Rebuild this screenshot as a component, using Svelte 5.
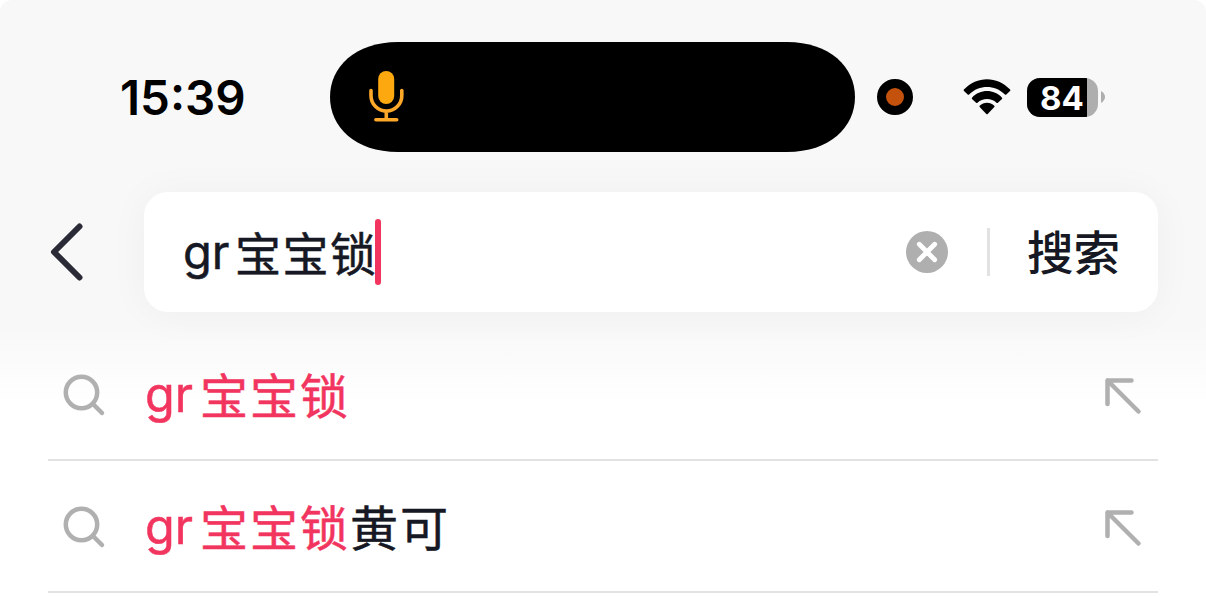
<script>
    let query = { latin: 'gr', cjk: '宝宝锁' };
    let battery = 84;

    // Each suggestion keeps the matched part apart from the rest
    let suggestions = [
        { rest: '' },
        { rest: '黄可' },
    ];
</script>

<div class="screen">
    <header class="status">
        <span class="time">15:39</span>
        <div class="island">
            <!-- The pill's ends are flatter than a plain ellipse -->
            <svg class="pill" width="525" height="110" viewBox="0 0 525 110">
                <path d="M68 0H457C500 0 525 25 525 55S500 110 457 110H68C25 110 0 85 0 55S25 0 68 0Z" />
            </svg>
            <svg class="mic" width="38" height="54" viewBox="0 0 38 54">
                <rect x="10.2" y="2" width="16" height="33" rx="8" fill="#fea810" />
                <path d="M3 21.5v5.2a15.4 15.4 0 0 0 30.8 0v-5.2M18.3 42.5v8M7.9 50.8h20.8" />
            </svg>
        </div>
        <span class="recording"></span>
        <svg class="wifi" width="48" height="36" viewBox="0 0 48 36">
            <path d="M0.9 10.6C14 -3.2 34 -3.2 47.1 10.6Q47.6 11.3 47 12L43.3 15.4Q42.6 16 41.9 15.4C31.5 5.6 16.5 5.6 6.1 15.4Q5.4 16 4.7 15.4L1 12Q.4 11.3 .9 10.6Z" />
            <path d="M9 18.7C17 9.9 31 9.9 39 18.7Q39.5 19.4 39 20L34.9 23.8Q34.2 24.3 33.5 23.7C28.5 18.7 19.5 18.7 14.5 23.7Q13.8 24.3 13.1 23.8L9 20Q8.5 19.4 9 18.7Z" />
            <path d="M16.7 26.7C20.5 22.7 27.5 22.7 31.3 26.7Q31.8 27.4 31.3 28L24.7 34.9Q24 35.5 23.3 34.9L16.7 28Q16.2 27.4 16.7 26.7Z" />
        </svg>
        <div class="battery">
            <div class="level" style="width: {battery}%"></div>
            <span class="percent">{battery}</span>
        </div>
        <svg class="nub" width="5" height="14" viewBox="0 0 5 14">
            <path d="M0 1Q4 3.5 4 7T0 13Z" />
        </svg>
    </header>

    <div class="search">
        <svg class="back" width="36" height="60" viewBox="0 0 36 60">
            <path d="M31.5 4.5L6 30L31.5 55.5" />
        </svg>
        <div class="box">
            <span class="query"><span class="latin">{query.latin}</span><span class="cjk">{query.cjk}</span></span>
            <span class="caret"></span>
            <svg class="clear" width="42" height="42" viewBox="0 0 42 42">
                <circle cx="21" cy="21" r="21" />
                <path d="M13.3 13.3L28.7 28.7M28.7 13.3L13.3 28.7" />
            </svg>
            <span class="divider"></span>
            <span class="submit">搜索</span>
        </div>
    </div>

    <ul class="list">
        {#each suggestions as item}
            <li>
                <svg class="lens" width="44" height="44" viewBox="0 0 44 44">
                    <circle cx="19.5" cy="18.5" r="15.7" />
                    <path d="M31 30L40 39" />
                </svg>
                <span class="suggestion"><span class="match"><span class="latin">{query.latin}</span><span class="cjk">{query.cjk}</span></span><span class="cjk">{item.rest}</span></span>
                <svg class="fill" width="38" height="38" viewBox="0 0 38 38">
                    <path d="M27.5 3.5H3.5V27M3.5 3.5L34.5 34.5" />
                </svg>
            </li>
        {/each}
    </ul>
</div>

<style>
    :global(body) {
        margin: 0;
        background: #fff;
    }

    .screen {
        width: 1206px;
        height: 596px;
        overflow: hidden;
        border-radius: 12px 12px 0 0;
        background: linear-gradient(#f8f8f8 325px, #fff 405px);
        font-family: Inter, "Noto Sans CJK SC", sans-serif;
        color: #161823;
    }

    svg {
        display: block;
        flex: none;
    }

    .status {
        display: flex;
        align-items: center;
        box-sizing: border-box;
        height: 192px;
        padding: 2px 0 0 120px;
    }

    .time {
        width: 210px;
        padding-top: 2px;
        font-size: 47.5px;
        font-weight: 600;
        line-height: 60px;
        color: #000;
    }

    .island {
        display: grid;
        width: 525px;
        height: 110px;
    }

    .pill,
    .mic {
        grid-area: 1 / 1;
    }

    .mic {
        margin: 27px 0 0 38px;
    }

    .mic path {
        fill: none;
        stroke: #fea82a;
        stroke-width: 3.6;
        stroke-linecap: round;
    }

    .recording {
        box-sizing: border-box;
        width: 36px;
        height: 36px;
        margin-left: 21.5px;
        border: 9.5px solid #000;
        border-radius: 50%;
        background: #c4520c;
    }

    .wifi {
        margin-left: 50px;
    }

    .battery {
        display: grid;
        width: 71px;
        height: 39px;
        margin-left: 16.5px;
        overflow: hidden;
        border-radius: 13px;
        background: #aeaeae;
    }

    .level,
    .percent {
        grid-area: 1 / 1;
    }

    .level {
        background: #000;
    }

    .percent {
        padding: 1px 0 0 13px;
        font-size: 33px;
        font-weight: 700;
        line-height: 38px;
        color: #fff;
    }

    .nub {
        margin-left: 3px;
        fill: #aeaeae;
    }

    .search {
        display: flex;
        align-items: center;
        height: 120px;
        padding: 0 48px;
    }

    .back {
        margin-right: 60px;
    }

    .back path {
        fill: none;
        stroke: #2b2b38;
        stroke-width: 6;
        stroke-linecap: round;
        stroke-linejoin: round;
    }

    .box {
        display: flex;
        flex: 1;
        align-items: center;
        height: 120px;
        border-radius: 24px;
        background: #fff;
        box-shadow: 0 2px 40px rgba(0, 0, 0, 0.045);
    }

    .query {
        display: flex;
        padding: 4px 0 0 39px;
        font-size: 47px;
        line-height: 60px;
        white-space: nowrap;
        -webkit-text-stroke: 0.5px;
    }

    .latin {
        margin-top: -2px;
    }

    .query .latin {
        width: 52px;
    }

    .query .cjk {
        font-size: 46px;
        letter-spacing: 1.5px;
    }

    .caret {
        width: 6px;
        height: 66px;
        margin-left: -2.5px;
        border-radius: 3px;
        background: #f2355f;
    }

    .clear {
        margin-left: auto;
    }

    .clear circle {
        fill: #afafb0;
    }

    .clear path {
        stroke: #fff;
        stroke-width: 4.8;
        stroke-linecap: round;
    }

    .divider {
        width: 3px;
        height: 48px;
        margin-left: 39px;
        background: #e2e2e3;
    }

    .submit {
        margin: 0 38px 0 37px;
        padding-top: 1px;
        font-size: 46.5px;
        font-weight: 500;
        line-height: 60px;
    }

    .list {
        margin: 17px 48px 0;
        padding: 0;
        list-style: none;
    }

    li {
        display: flex;
        align-items: center;
        box-sizing: border-box;
        height: 132px;
        padding: 3px 16px 0 14px;
        border-bottom: 2px solid #e2e2e3;
    }

    .lens {
        margin-right: 39px;
    }

    .lens,
    .fill {
        fill: none;
        stroke: #b0b0b1;
        stroke-width: 4.5;
        stroke-linecap: round;
        stroke-linejoin: round;
    }

    .suggestion {
        display: flex;
        flex: 1;
        padding-top: 3px;
        font-size: 48.5px;
        line-height: 60px;
        white-space: nowrap;
        -webkit-text-stroke: 0.5px;
    }

    .match {
        display: flex;
        color: #f2355f;
    }

    .suggestion .latin {
        width: 55px;
    }

    .suggestion .cjk {
        font-size: 48px;
        letter-spacing: 2px;
    }
</style>
